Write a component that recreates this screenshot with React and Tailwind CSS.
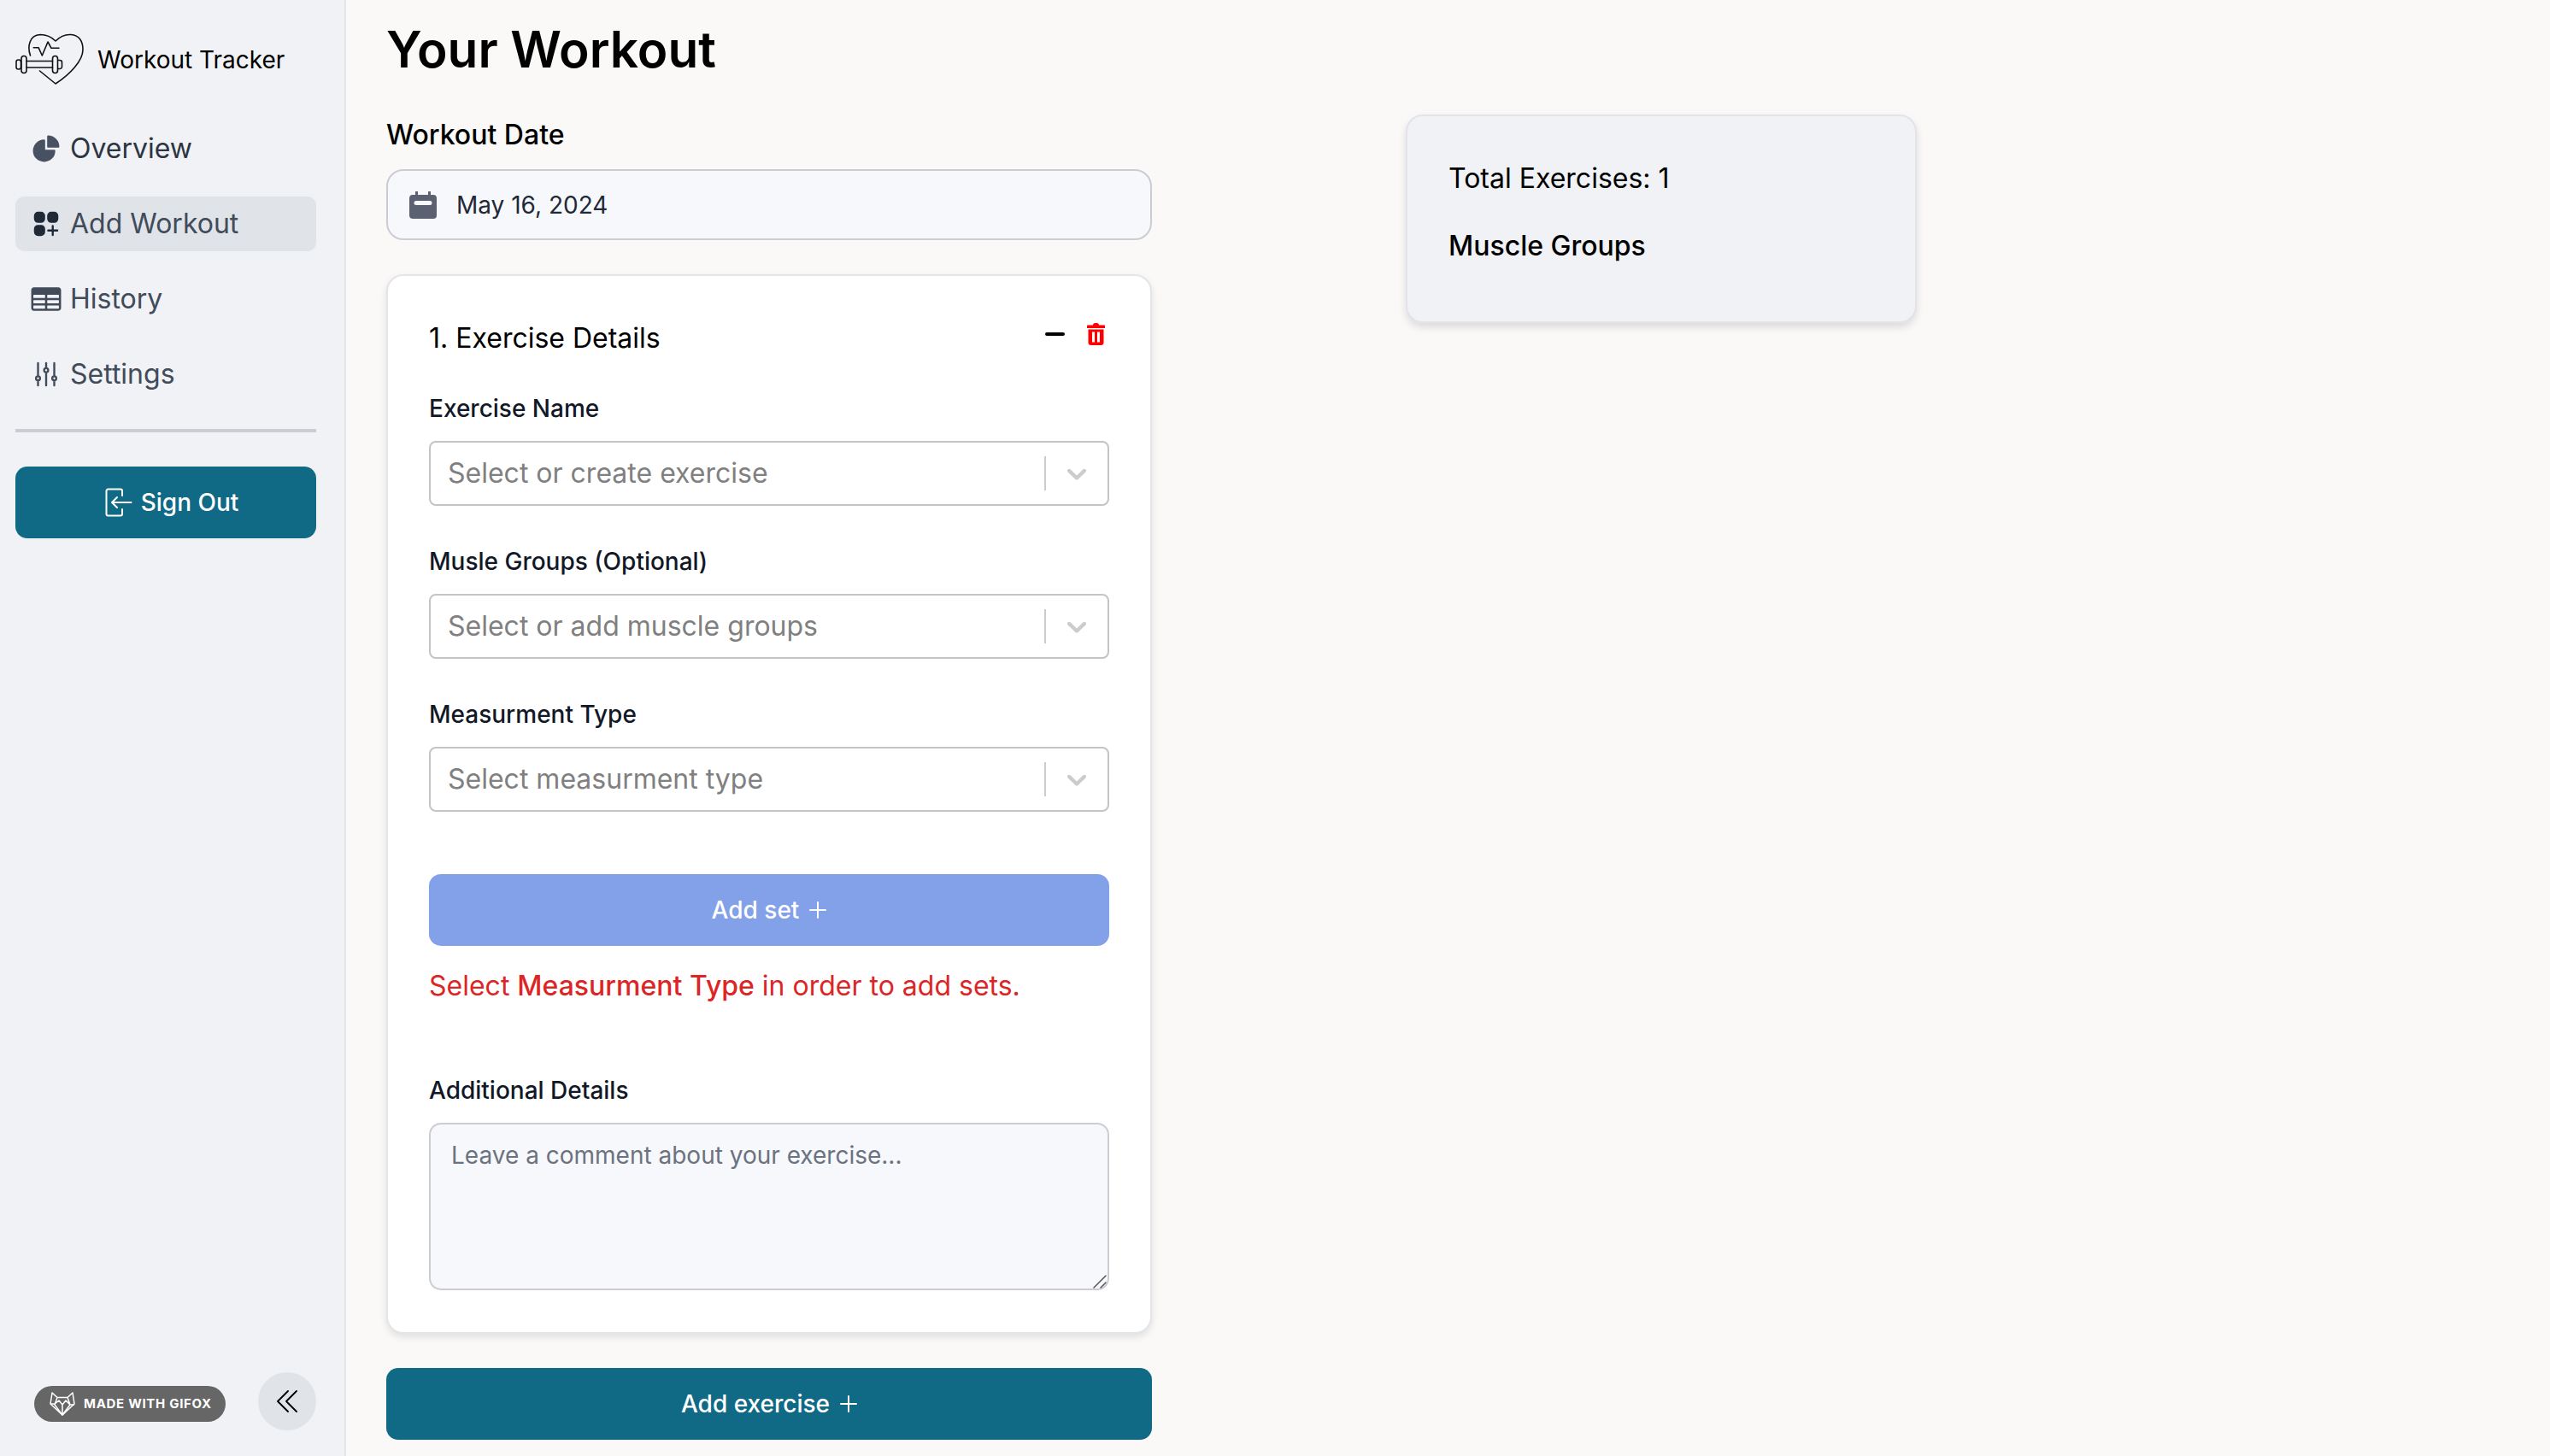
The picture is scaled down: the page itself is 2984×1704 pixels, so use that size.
import React from 'react';
import { HiChartPie, HiSquaresPlus, HiTableCells, HiOutlineAdjustmentsVertical } from 'react-icons/hi2';

const HeartLogo = () => (
  <svg viewBox="18 40 82 62" className="w-[82px] h-[62px] shrink-0" fill="none" stroke="#111" strokeWidth="1.6" strokeLinecap="round" strokeLinejoin="round">
    <path d="M35.5 66C32 56 34 42 47 41.5C54 41.5 60 44 65 49C70 44 76 41 83 41.5C93 42 97 50 97 59C97 72 82 88 65 99L46.5 84" />
    <path d="M39.3 56.7H45L49.3 66L56 50L60 57.3H69" />
    <rect x="25" y="66.5" width="6" height="20" rx="3" />
    <rect x="19" y="71" width="5.500" height="11" rx="2.500" />
    <rect x="61.500" y="66.500" width="6" height="20" rx="3" />
    <path d="M68 71.500h2a2.500 2.500 0 0 1 2.500 2.500v5a2.500 2.500 0 0 1-2.500 2.500h-2" />
    <path d="M31 72.500H61.500M31 80H61.500" />
  </svg>
);

const NavItem = ({ icon, label, active, dark }) => (
  <div className={`h-[64px] rounded-[10px] flex items-center pl-[17px] gap-[9px] text-[32px] ${active ? 'bg-[#e0e3e8] text-[#414b5a]' : dark ? 'text-[#2d3542]' : 'text-[#414b5a]'}`}>
    {icon}
    <span>{label}</span>
  </div>
);

const SignOutIcon = () => (
  <svg viewBox="0 0 32 34" className="w-[32px] h-[34px]" fill="none" stroke="white" strokeWidth="2" strokeLinecap="round" strokeLinejoin="round">
    <path d="M20 9V3.500A2 2 0 0 0 18 1.500H3.500A2 2 0 0 0 1.500 3.500V30.500A2 2 0 0 0 3.500 32.500H18A2 2 0 0 0 20 30.500V25" />
    <path d="M30.500 17H8M8 17L14 11M8 17L14 23" />
  </svg>
);

const FoxIcon = () => (
  <svg viewBox="0 0 30 28" className="w-[30px] h-[28px]" fill="none" stroke="white" strokeWidth="1.500" strokeLinejoin="round">
    <path d="M3 1L9 6.500H21L27 1L29 14L15 27L1 14Z" />
    <path d="M9 6.500L6 15L15 27L24 15L21 6.500M1 14H6L11 10L15 15L19 10L24 15H29M15 15V27" />
  </svg>
);

const Plus = () => (
  <svg viewBox="0 0 20 20" className="w-[20px] h-[20px]" stroke="white" strokeWidth="2" strokeLinecap="round">
    <path d="M10 1V19M1 10H19" />
  </svg>
);

const Sidebar = () => (
  <aside className="w-[405px] shrink-0 bg-[#f0f2f6] border-r-[2px] border-[#e3e5e9] pl-[18px] pr-[33px] pt-[39px] pb-[30px] flex flex-col justify-between">
    <div>
      <div className="flex items-center gap-[14px] h-[62px] text-[28px] text-black">
        <HeartLogo />
        <span>Workout Tracker</span>
      </div>
      <nav className="mt-[41px] flex flex-col gap-[24px]">
        <NavItem dark label="Overview" icon={<HiChartPie className="w-[38px] h-[38px] text-[#475161] shrink-0" />} />
        <NavItem active label="Add Workout" icon={<HiSquaresPlus className="w-[38px] h-[38px] text-[#1f2937] shrink-0" />} />
        <NavItem label="History" icon={<HiTableCells className="w-[38px] h-[38px] text-[#414b5a] shrink-0 scale-[1.05]" />} />
        <NavItem label="Settings" icon={<HiOutlineAdjustmentsVertical className="w-[38px] h-[38px] text-[#414b5a] shrink-0" />} />
      </nav>
      <div className="mt-[32px] h-[4px] bg-[#cbcdd3]" />
      <button className="mt-[40px] w-full h-[84px] rounded-[14px] bg-[#116a85] text-white text-[28px] font-medium flex items-center justify-center gap-[10px] pl-[14px]">
        <SignOutIcon />
        Sign Out
      </button>
    </div>
    <div className="flex items-center justify-between pl-[22px]">
      <div className="mt-[6px] w-[224px] h-[42px] rounded-full bg-[#666666] flex items-center pl-[18px] gap-[10px] text-white text-[15px] font-bold tracking-[0.7px]">
        <FoxIcon />
        <span>MADE WITH GIFOX</span>
      </div>
      <button className="w-[68px] h-[68px] rounded-full bg-[#e0e3e8] flex items-center justify-center">
        <svg viewBox="0 0 24 28" className="w-[24px] h-[28px]" fill="none" stroke="black" strokeWidth="1.800" strokeLinecap="round" strokeLinejoin="round">
          <path d="M13 2L1 14L13 26M23 2L11 14L23 26" />
        </svg>
      </button>
    </div>
  </aside>
);

const Field = ({ label, placeholder }) => (
  <div>
    <div className="h-[40px] leading-[40px] text-[28px] font-medium text-[#111827]">{label}</div>
    <div className="mt-[18px] h-[76px] rounded-[8px] border-[2px] border-[#c4c4c4] bg-white flex items-center pl-[20px]">
      <span className="flex-1 text-[32px] text-[#808080]">{placeholder}</span>
      <div className="w-[2px] h-[40px] bg-[#cccccc]" />
      <svg viewBox="0 0 20 20" className="w-[38px] h-[38px] mx-[17px] shrink-0" fill="#cccccc">
        <path d="M4.516 7.548c0.436-0.446 1.043-0.481 1.576 0l3.908 3.747 3.908-3.747c0.533-0.481 1.141-0.446 1.576 0 0.436 0.445 0.408 1.197 0 1.615-0.406 0.418-4.695 4.502-4.695 4.502-0.217 0.223-0.502 0.335-0.789 0.335s-0.572-0.112-0.789-0.335c0 0-4.287-4.084-4.695-4.502s-0.436-1.17 0-1.615z" />
      </svg>
    </div>
  </div>
);

const ExerciseCard = () => (
  <section className="mt-[40px] rounded-[20px] border-[2px] border-[#e3e5e9] bg-white shadow-[0_4px_8px_rgba(0,0,0,0.1)] px-[48px] pt-[53px] pb-[49px]">
    <div className="h-[40px] flex items-center justify-between">
      <h2 className="text-[32px] text-black">1. Exercise Details</h2>
      <div className="flex items-center gap-[26px] pr-[5px] -mt-[10px]">
        <div className="w-[23px] h-[4px] rounded-full bg-black" />
        <svg viewBox="0 0 21 26" className="w-[21px] h-[26px]" fill="#ff0000">
          <path fillRule="evenodd" d="M7 2.500C7 1 8 0 9.500 0h2C13 0 14 1 14 2.500H20C20.600 2.500 21 3 21 3.500V6H0V3.500C0 3 .4 2.500 1 2.500ZM1.500 7.500H19.500V23C19.500 24.700 18.200 26 16.500 26H4.500C2.800 26 1.500 24.700 1.500 23ZM6 10.500V22.500H9V10.500ZM12 10.500V22.500H15V10.500Z" />
        </svg>
      </div>
    </div>
    <div className="mt-[42px] flex flex-col gap-[45px]">
      <Field label="Exercise Name" placeholder="Select or create exercise" />
      <Field label="Musle Groups (Optional)" placeholder="Select or add muscle groups" />
      <Field label="Measurment Type" placeholder="Select measurment type" />
    </div>
    <button className="mt-[73px] w-full h-[84px] rounded-[14px] bg-[#83a1e9] text-white text-[28px] font-medium flex items-center justify-center gap-[12px]">
      Add set
      <Plus />
    </button>
    <p className="mt-[27px] h-[40px] leading-[40px] text-[32px] text-[#dc2626]">
      Select <span className="font-medium">Measurment Type</span> in order to add sets.
    </p>
    <div className="mt-[82px] h-[40px] leading-[40px] text-[28px] font-medium text-[#111827]">Additional Details</div>
    <div className="relative mt-[18px]">
      <textarea
        placeholder="Leave a comment about your exercise..."
        className="block w-full h-[196px] resize-none rounded-[14px] border-[2px] border-[#cbcdd3] bg-[#f7f8fb] px-[24px] py-[16px] text-[28px] leading-[40px] placeholder:text-[#6b7280] outline-none"
      />
      <svg viewBox="0 0 16 16" className="absolute right-[3px] bottom-[2px] w-[16px] h-[16px] pointer-events-none" stroke="#555" strokeWidth="1.500" strokeLinecap="round">
        <path d="M1 15L15 1M9 15L15 9" />
      </svg>
    </div>
  </section>
);

const SummaryCard = () => (
  <div className="mt-[134px] w-[598px] h-[244px] rounded-[20px] border-[2px] border-[#e2e4e9] bg-[#f0f2f6] shadow-[0_5px_10px_rgba(0,0,0,0.12)] px-[48px] pt-[50px] text-[32px] text-black">
    <div className="h-[46px] leading-[46px]">Total Exercises: 1</div>
    <div className="mt-[33px] h-[46px] leading-[46px] font-medium">Muscle Groups</div>
  </div>
);

export default function App() {
  return (
    <div className="flex w-[2984px] h-[1704px] overflow-hidden bg-[#faf9f7] font-['Inter',sans-serif]">
      <Sidebar />
      <main className="flex-1 pl-[47px] flex items-start gap-[297px]">
        <div className="w-[896px]">
          <h1 className="mt-[22px] h-[72px] leading-[72px] text-[58.500px] font-semibold text-black">Your Workout</h1>
          <div className="mt-[44px] h-[40px] leading-[40px] text-[32px] font-medium text-black">Workout Date</div>
          <div className="mt-[20px] h-[83px] rounded-[20px] border-[2px] border-[#cbcdd3] bg-[#f7f8fb] flex items-center pl-[25px] gap-[23px]">
            <svg viewBox="0 0 32 32" className="w-[32px] h-[32px] shrink-0" fill="#5b6171">
              <path fillRule="evenodd" d="M7 0h3v4h12V0h3v4h3a4 4 0 0 1 4 4v20a4 4 0 0 1-4 4H4a4 4 0 0 1-4-4V8a4 4 0 0 1 4-4h3ZM8 11a2 2 0 0 0 0 5h16a2 2 0 0 0 0-5Z" />
            </svg>
            <span className="text-[28px] text-[#1f2937]">May 16, 2024</span>
          </div>
          <ExerciseCard />
          <button className="mt-[40px] w-full h-[84px] rounded-[14px] bg-[#116a85] text-white text-[28px] font-medium flex items-center justify-center gap-[12px]">
            Add exercise
            <Plus />
          </button>
        </div>
        <SummaryCard />
      </main>
    </div>
  );
}
